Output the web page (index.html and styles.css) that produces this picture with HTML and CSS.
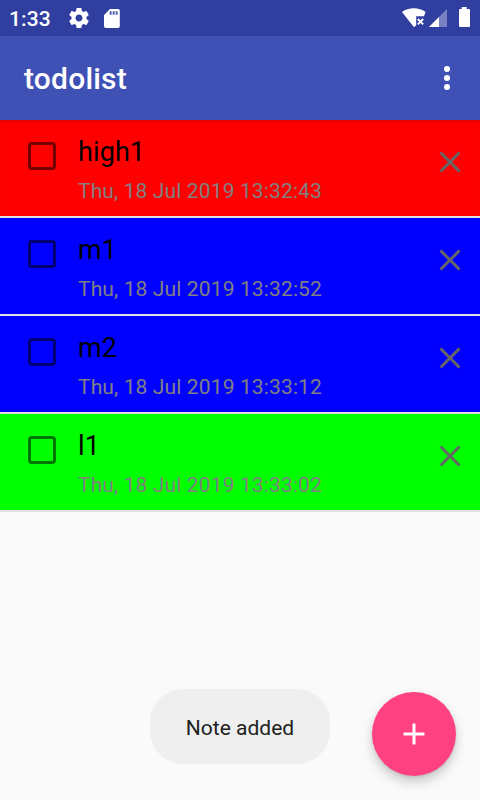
FILE: index.html
```html
<!DOCTYPE html>
<html lang="en">
<head>
<meta charset="utf-8">
<title>todolist</title>
<link rel="stylesheet" href="styles.css">
</head>
<body>
<div class="screen">
  <header class="status">
    <span class="clock">1:33</span>
    <svg class="gear" width="24" height="24" viewBox="0 0 24 24"><path fill="#fff" d="M19.43 12.98c.04-.32.07-.64.07-.98s-.03-.66-.07-.98l2.11-1.65c.19-.15.24-.42.12-.64l-2-3.46c-.12-.22-.39-.3-.61-.22l-2.49 1c-.52-.4-1.08-.73-1.69-.98l-.38-2.65C14.46 2.18 14.25 2 14 2h-4c-.25 0-.46.18-.49.42l-.38 2.65c-.61.25-1.17.59-1.69.98l-2.49-1c-.23-.09-.49 0-.61.22l-2 3.46c-.13.22-.07.49.12.64l2.11 1.65c-.04.32-.07.65-.07.98s.03.66.07.98l-2.11 1.65c-.19.15-.24.42-.12.64l2 3.46c.12.22.39.3.61.22l2.49-1c.52.4 1.08.73 1.69.98l.38 2.65c.03.24.24.42.49.42h4c.25 0 .46-.18.49-.42l.38-2.65c.61-.25 1.17-.59 1.69-.98l2.49 1c.23.09.49 0 .61-.22l2-3.46c.12-.22.07-.49-.12-.64l-2.11-1.65zM12 15.5c-1.93 0-3.5-1.57-3.5-3.5s1.57-3.5 3.5-3.5 3.5 1.57 3.5 3.5-1.57 3.5-3.5 3.5z"/></svg>
    <svg class="sd" width="16" height="19" viewBox="0 0 16 19"><path fill="#fff" d="M14 0H6L0 6v11.200a1.800 1.800 0 0 0 1.800 1.800H14a1.800 1.800 0 0 0 1.800-1.800V1.800A1.800 1.800 0 0 0 14 0z"/><path fill="#303f9f" fill-opacity=".85" d="M5.700 2.200h1.900v3.600H5.700zM8.700 2.200h1.900v3.600H8.700zM11.700 2.200h1.900v3.600h-1.900z"/></svg>
    <svg class="system" width="70" height="24" viewBox="0 0 70 24"><path fill="#fff" d="M0 6C6.500 1 17 1 23.500 6L22 10.300H14.200V19.300L12 21.300z"/><path stroke="#fff" stroke-width="1.800" d="M15.800 13l5.400 5.400M21.200 13l-5.400 5.400"/><path fill="#fff" fill-opacity=".35" d="M45 3v18H27z"/><path fill="#fff" d="M37 11v10H27z"/><path fill="#fff" d="M57 3h2.700V1h5V3H67q1 0 1 1v16q0 1-1 1h-9q-1 0-1-1V4q0-1 1-1z"/></svg>
  </header>
  <div class="toolbar">
    <h1>todolist</h1>
    <svg width="6" height="24" viewBox="0 0 6 24"><g fill="#fff"><circle cx="3" cy="3" r="3"/><circle cx="3" cy="12" r="3"/><circle cx="3" cy="21" r="3"/></g></svg>
  </div>
  <main class="list">
    <article class="note high">
      <span class="check"></span>
      <div class="text"><h2>high1</h2><p>Thu, 18 Jul 2019 13:32:43</p></div>
      <svg class="close" viewBox="0 0 24 24"><path d="M19 6.410L17.590 5 12 10.590 6.410 5 5 6.410 10.590 12 5 17.590 6.410 19 12 13.410 17.590 19 19 17.590 13.410 12z"/></svg>
    </article>
    <article class="note medium">
      <span class="check"></span>
      <div class="text"><h2>m1</h2><p>Thu, 18 Jul 2019 13:32:52</p></div>
      <svg class="close" viewBox="0 0 24 24"><path d="M19 6.410L17.590 5 12 10.590 6.410 5 5 6.410 10.590 12 5 17.590 6.410 19 12 13.410 17.590 19 19 17.590 13.410 12z"/></svg>
    </article>
    <article class="note medium">
      <span class="check"></span>
      <div class="text"><h2>m2</h2><p>Thu, 18 Jul 2019 13:33:12</p></div>
      <svg class="close" viewBox="0 0 24 24"><path d="M19 6.410L17.590 5 12 10.590 6.410 5 5 6.410 10.590 12 5 17.590 6.410 19 12 13.410 17.590 19 19 17.590 13.410 12z"/></svg>
    </article>
    <article class="note low">
      <span class="check"></span>
      <div class="text"><h2>l1</h2><p>Thu, 18 Jul 2019 13:33:02</p></div>
      <svg class="close" viewBox="0 0 24 24"><path d="M19 6.410L17.590 5 12 10.590 6.410 5 5 6.410 10.590 12 5 17.590 6.410 19 12 13.410 17.590 19 19 17.590 13.410 12z"/></svg>
    </article>
  </main>
  <div class="toast">Note added</div>
  <div class="fab"><svg width="22" height="22" viewBox="0 0 22 22"><path fill="#fff" d="M9.500 0.500h3v9h9v3h-9v9h-3v-9h-9v-3h9z"/></svg></div>
</div>
</body>
</html>
```
FILE: styles.css
```css
* { box-sizing: border-box; margin: 0; }
body { font-family: Roboto, sans-serif; background: #fafafa; }
svg { display: block; flex: none; }
.screen { position: relative; width: 480px; height: 800px; overflow: hidden; background: #fafafa; }
.status { display: flex; align-items: flex-start; height: 36px; background: #303f9f; color: #fff; }
.clock { width: 57px; padding-left: 9px; font-size: 21px; font-weight: 500; line-height: 25px; letter-spacing: .15px; padding-top: 7px; white-space: nowrap; }
.gear { margin: 6px 0 0 9.500px; }
.sd { margin: 9px 0 0 13px; }
.system { margin: 6px 8px 0 auto; }
.toolbar { display: flex; align-items: center; justify-content: space-between; height: 84px; padding: 0 30px 0 24px; background: #3f51b5; color: #fff; }
.toolbar h1 { font-size: 30px; font-weight: 500; line-height: 36px; letter-spacing: .2px; padding-top: 2px; }
.note { display: flex; align-items: flex-start; height: 98px; border-bottom: 2px solid #e0e0e0; }
.high { background: #f00; box-shadow: inset 0 4px 4px -3px rgba(0, 0, 0, .15); }
.medium { background: #00f; }
.low { background: #0f0; }
.check { flex: none; width: 28px; height: 28px; margin: 22px 22px 0 28px; border: 3px solid rgba(0, 0, 0, .54); border-radius: 4px; }
.text { flex: 1; padding-top: 15px; }
.text h2 { font-size: 27px; font-weight: 400; line-height: 34px; letter-spacing: .1px; color: #000; }
.text p { font-size: 21px; line-height: 26px; margin-top: 9px; letter-spacing: .13px; color: #808080; white-space: nowrap; }
.close { width: 36px; height: 36px; margin: 24px 12px 0 0; fill: #666; }
.toast { position: absolute; left: 150px; top: 689px; width: 180px; height: 75px; border-radius: 33px; background: #efefef; color: #212121; font-size: 21px; line-height: 79px; text-align: center; white-space: nowrap; }
.fab { position: absolute; left: 372px; top: 692px; width: 84px; height: 84px; border-radius: 50%; background: #ff4081; display: flex; align-items: center; justify-content: center; box-shadow: 0 6px 12px rgba(0, 0, 0, .2), 0 1px 3px rgba(0, 0, 0, .1); }
```
